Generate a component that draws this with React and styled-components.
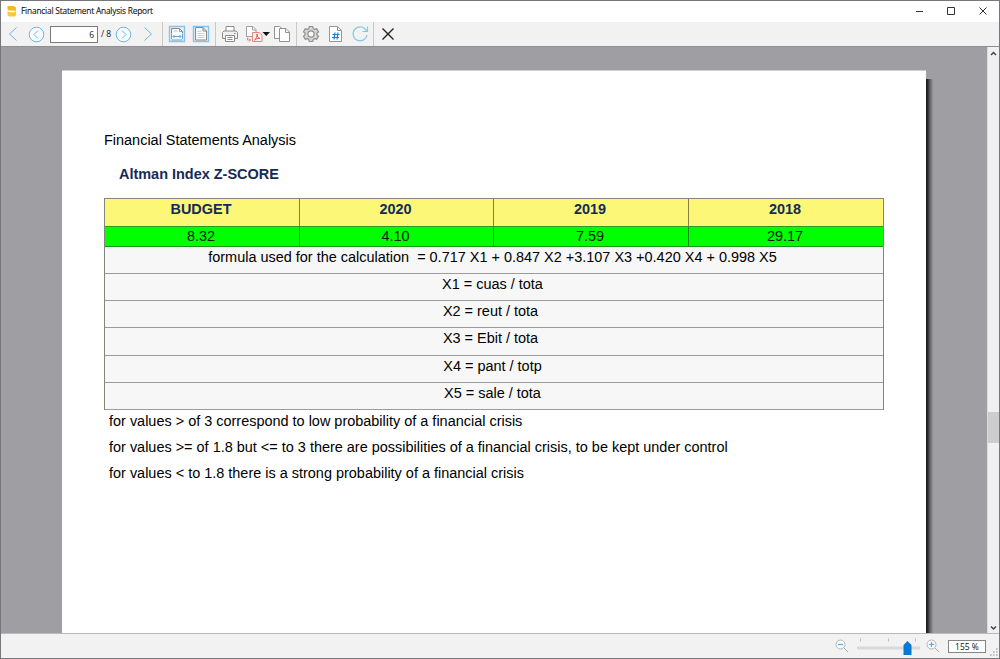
import React from "react";
import styled, { createGlobalStyle } from "styled-components";

const GlobalStyle = createGlobalStyle`
  * { box-sizing: border-box; }
  body { margin: 0; overflow: hidden; }
`;

const Window = styled.div`
  width: 1000px;
  height: 659px;
  display: flex;
  flex-direction: column;
  border: 1px solid #77777a;
  background: #fff;
  font-family: "Open Sans", "Noto Sans", sans-serif;
  color: #111;
`;

const TitleBar = styled.header`
  height: 21px;
  flex: none;
  display: flex;
  align-items: center;
  padding: 0 0 2px 6px;
`;

const Title = styled.span`
  flex: 1;
  margin-left: 4px;
  font-size: 8.4px;
  line-height: 20px;
  letter-spacing: -0.21px;
  -webkit-text-stroke: 0.1px #111;
`;

const Toolbar = styled.nav`
  height: 24px;
  flex: none;
  display: flex;
  align-items: center;
  background: #f2f2f2;
`;

const Icon = styled.svg`
  display: block;
  flex: none;
  fill: none;
  margin-left: ${(p) => p.$gap || 0}px;
`;

const Divider = styled.i`
  width: 1px;
  height: 24px;
  background: #c9c9c9;
  margin-left: ${(p) => p.$gap}px;
`;

const PageInput = styled.div`
  width: 48px;
  height: 17px;
  margin-left: 5px;
  padding-right: 3px;
  border: 1px solid #7a7a7a;
  background: #fff;
  text-align: right;
  font-size: 8.5px;
  line-height: 15px;
`;

const PageCount = styled.span`
  width: 17px;
  padding-left: 3px;
  font-size: 8.5px;
  line-height: 16px;
  white-space: nowrap;
`;

const Workspace = styled.main`
  flex: 1;
  min-height: 0;
  display: flex;
  background: #9f9ea3;
  border-top: 1px solid #8e8d93;
`;

const Viewport = styled.div`
  flex: 1;
  display: flex;
  overflow: hidden;
  padding: 23px 0 0 61px;
`;

const Sheet = styled.article`
  width: 864px;
  background: #fff;
  border-top: 1px solid #cfcfd1;
  padding: 60px 42px 0;
  font-family: "Liberation Sans", Arial, sans-serif;
  font-size: 14.46px;
  color: #000;
`;

const SheetShadow = styled.div`
  width: 7px;
  margin-top: 9px;
  background: linear-gradient(to right, #161619, #2b2b2e 25%, #68676b 60%, #98979c);
`;

const ReportTitle = styled.h1`
  margin: 0;
  font-size: 14.46px;
  font-weight: 400;
  line-height: 18px;
`;

const SectionTitle = styled.h2`
  margin: 16px 0 15px 15px;
  font-size: 14.46px;
  font-weight: 700;
  line-height: 18px;
  color: #142b57;
`;

const Table = styled.section`
  width: 780px;
  border: 1px solid #85857d;
  border-bottom: 0;
`;

const Row = styled.div`
  display: grid;
  grid-template-columns: 194px 194px 195px 195px;
  height: ${(p) => (p.$head ? 28 : 20)}px;
  background: ${(p) => (p.$head ? "#fcf777" : "#00ff00")};
  border-bottom: 1px solid ${(p) => (p.$head ? "#2c9c20" : "#159a15")};
  color: ${(p) => (p.$head ? "#142b57" : "#001a00")};
  font-weight: ${(p) => (p.$head ? 700 : 400)};
  line-height: ${(p) => (p.$head ? 20 : 19)}px;
`;

const Cell = styled.div`
  text-align: center;
  padding-right: 2px;
  border-left: 1px solid ${(p) => (p.$head ? "#84823f" : "#078c07")};
  &:first-child {
    border-left: 0;
  }
`;

const FormulaRow = styled.div`
  height: ${(p) => p.$height || 27}px;
  border-bottom: 1px solid #9b9b9b;
  background: #f7f7f7;
  text-align: center;
  line-height: 20px;
  padding-right: 3px;
  white-space: pre;
`;

const Note = styled.p`
  margin: 0 0 0 5px;
  line-height: 26px;
  white-space: nowrap;
  &:first-of-type { margin-top: -2px; }
`;

const Scrollbar = styled.aside`
  width: 12px;
  display: flex;
  flex-direction: column;
  align-items: center;
  background: #f0f0f0;
  border-left: 1px solid #dcdcde;
`;

const Thumb = styled.div`
  width: 11px;
  height: 31px;
  margin: 352px 0 auto;
  background: #cdcdcd;
`;

const StatusBar = styled.footer`
  height: 25px;
  flex: none;
  display: flex;
  align-items: center;
  justify-content: flex-end;
  border-top: 1px solid #b9b9bb;
  background: #f2f2f2;
`;

const ZoomValue = styled.div`
  width: 38px;
  height: 13px;
  margin-left: 8px;
  border: 1px solid #858585;
  background: #fff;
  text-align: center;
  font-size: 8.5px;
  line-height: 11px;
`;

const years = ["BUDGET", "2020", "2019", "2018"];
const scores = ["8.32", "4.10", "7.59", "29.17"];
const variables = [
  "X1 = cuas / tota",
  "X2 = reut / tota ",
  "X3 = Ebit / tota ",
  "X4 = pant / totp",
  "X5 = sale / tota",
];
const notes = [
  "for values > of 3 correspond to low probability of a financial crisis",
  "for values >= of 1.8 but <= to 3 there are possibilities of a financial crisis, to be kept under control",
  "for values < to 1.8 there is a strong probability of a financial crisis",
];

const BLUE = "#6db5df";

const Chevron = ({ flip, gap }) => (
  <Icon width="10" height="16" $gap={gap} stroke={BLUE}>
    <path d={flip ? "M1.5 1.5 8.500 8l-7 6.500" : "M8.500 1.500 1.500 8l7 6.500"} />
  </Icon>
);

const CircleChevron = ({ flip, gap }) => (
  <Icon width="17" height="17" $gap={gap} stroke={BLUE}>
    <circle cx="8.500" cy="8.500" r="7.300" fill="#f8fbfd" />
    <path d={flip ? "M7 4.500l4 4L7 12.500" : "M10 4.500 6 8.500 10 12.500"} />
  </Icon>
);

const PageView = ({ wide, gap }) => (
  <Icon width="18" height="18" $gap={gap}>
    <rect x="1.500" y="1.500" width="15" height="15" stroke="#85c3ea" strokeWidth="1.400" fill="#e9f2f8" />
    {wide ? (
      <>
        <path d="M3.500 8.500V3.500h8L14.500 6.500v2" fill="#fafafa" stroke="#888" />
        <path d="M4 8h10v6H4z" fill="#fafafa" />
        <path d="M11.500 3.500V6.500H14.500M3.500 15h11" stroke="#999" />
        <path d="M5.500 6h4" stroke="#c4c4c4" />
        <path d="M3.500 9v5M14.500 9v5M5 11.500h8M6.500 10 5 11.500 6.500 13M11.500 10 13 11.500 11.500 13" stroke="#58aae0" />
      </>
    ) : (
      <>
        <path d="M3.500 2.500h7.500L14.500 6v9H3.500z" fill="#fafafa" stroke="#888" />
        <path d="M11 2.500v3.500h3.500" stroke="#888" />
        <path d="M5.500 6.500h4M5.500 8.500h7M5.500 10.500h7M5.500 12.500h7" stroke="#d2d2d2" />
      </>
    )}
  </Icon>
);

const Magnifier = ({ plus, gap }) => (
  <Icon width="14" height="14" $gap={gap}>
    <circle cx="5.500" cy="5.500" r="4.500" stroke="#b5b5b5" fill="#f7fafc" />
    <path d="M9 9l4 4" stroke="#aaa" />
    <path d={plus ? "M3 5.500h5M5.500 3v5" : "M3 5.500h5"} stroke="#55abe2" strokeWidth="1.200" />
  </Icon>
);

export default function App() {
  return (
    <>
      <GlobalStyle />
      <Window>
        <TitleBar>
          <Icon width="10" height="12">
            <path d="M0.500 1h6l2.500 1.500V5L8 6.300 6.500 5.500H2L0.500 4.500z" fill="#fbb81c" />
            <path d="M0.500 6 2.500 7.300h4.500L9 6V10.300L7.800 11.500H2L0.500 10.500z" fill="#fdc73b" />
          </Icon>
          <Title>Financial Statement Analysis Report</Title>
          <Icon width="76" height="10" stroke="#333">
            <path d="M4 5.500h7M35.500 1.500h7v7h-7zM67.500 1.500l7 7M74.500 1.500l-7 7" />
          </Icon>
          <Icon width="11" height="10" />
        </TitleBar>

        <Toolbar>
          <Chevron gap={7} />
          <CircleChevron gap={10} />
          <PageInput>6</PageInput>
          <PageCount>/ 8</PageCount>
          <CircleChevron flip />
          <Chevron flip gap={11} />
          <Divider $gap={9} />
          <PageView wide gap={5} />
          <PageView gap={6} />
          <Divider $gap={5} />
          <Icon width="18" height="18" $gap={5} stroke="#8b8b8b">
            <path d="M5 6V1.500h8V6" fill="#fff" />
            <path d="M4.500 13.500h-3v-6L3 6h12l1.500 1.500v6h-3" fill="#f0f0f0" />
            <path d="M4.500 10.500h9v6h-9zM6.500 12.500h5M6.500 14.500h5M13 8.500h1.500" fill="#fff" />
          </Icon>
          <Icon width="26" height="18" $gap={6}>
            <path d="M7 11.500H1.500v-10h6.500L11 4.500V8" fill="#fff" stroke="#a0a0a0" />
            <path d="M7.500 1.500V5H11" stroke="#a0a0a0" />
            <path d="M7.500 7.500h6.500l3 2.500v6.500h-9.500z" fill="#fff4f3" stroke="#ec827e" />
            <path d="M9.500 15c1.500-1 3-3.500 2.500-6 0 3 1.500 4 3 4.500-1.500-.5-4 .2-5.500 1.500z" stroke="#e04a46" strokeWidth=".9" />
            <path d="M2.500 12.500V15H5.500M4 13.500 5.500 15 4 16.500" stroke="#ec827e" />
            <path d="M17.500 7h7.500L21.250 11z" fill="#111" />
          </Icon>
          <Icon width="18" height="18" $gap={2} stroke="#929292">
            <path d="M1.500 13.500v-12H6.500l3 2.500v9.500z" fill="#fff" />
            <path d="M6.500 3.500h6.500l3.500 3.500v9.500h-10z" fill="#fff" />
            <path d="M12.500 3.500V7.500h4" />
          </Icon>
          <Divider $gap={5} />
          <Icon width="18" height="18" $gap={5} stroke="#909090" strokeWidth="1.200">
            <path d="M7.300 1.500h3.400l.6 2.200 1.200.7 2.200-.6 1.800 3-1.600 1.500v1.400l1.600 1.600-1.800 2.900-2.200-.6-1.200.7-.6 2.200H7.300l-.6-2.200-1.200-.7-2.200.6-1.800-2.900 1.600-1.600V8.300L1.500 6.800l1.800-3 2.200.6 1.200-.7z" fill="#d5d5d5" />
            <circle cx="9" cy="9" r="3.100" fill="#f8f8f8" />
          </Icon>
          <Icon width="15" height="18" $gap={8}>
            <path d="M1.500 1.500h8L13.500 5.500v11h-12z" fill="#fff" stroke="#959595" />
            <path d="M9.500 1.500v4h4" stroke="#959595" />
            <path d="M7 7.500l-1 7M10 7.500l-1 7M4.500 9.500h7M4 12.500h7" stroke="#1684d2" strokeWidth="1.200" />
          </Icon>
          <Icon width="18" height="18" $gap={8} stroke="#7dcbe5" strokeWidth="1.200">
            <path d="M15.500 6A7 7 0 1 0 16 10M16.500 1.500V6.500h-5" />
          </Icon>
          <Divider $gap={4} />
          <Icon width="14" height="14" $gap={7} stroke="#222" strokeWidth="1.400">
            <path d="M1.500 1.500l11 11M12.500 1.500l-11 11" />
          </Icon>
        </Toolbar>

        <Workspace>
          <Viewport>
            <Sheet>
              <ReportTitle>Financial Statements Analysis</ReportTitle>
              <SectionTitle>Altman Index Z-SCORE</SectionTitle>
              <Table>
                <Row $head>
                  {years.map((y) => <Cell $head key={y}>{y}</Cell>)}
                </Row>
                <Row>
                  {scores.map((s) => <Cell key={s}>{s}</Cell>)}
                </Row>
                <FormulaRow>{"formula used for the calculation  = 0.717 X1 + 0.847 X2 +3.107 X3 +0.420 X4 + 0.998 X5"}</FormulaRow>
                {variables.map((v) => (
                  <FormulaRow $height={27.2} key={v}>{v}</FormulaRow>
                ))}
              </Table>
              {notes.map((n) => <Note key={n}>{n}</Note>)}
            </Sheet>
            <SheetShadow />
          </Viewport>
          <Scrollbar>
            <Icon width="9" height="13" stroke="#444" strokeWidth="1.500">
              <path d="M2 8l2.500-2.500L7 8" />
            </Icon>
            <Thumb />
            <Icon width="9" height="13" stroke="#444" strokeWidth="1.500">
              <path d="M2 6.500 4.500 9 7 6.500" />
            </Icon>
          </Scrollbar>
        </Workspace>

        <StatusBar>
          <Magnifier />
          <Icon width="66" height="20" $gap={6}>
            <path d="M2 12h63" stroke="#d9d9d9" strokeWidth="3" />
            <path d="M5.500 2.500v3M33.500 2.500v3M60.500 2.500v3" stroke="#bbb" />
            <path d="M48.500 9l4-4 4 4v10h-8z" fill="#0878d4" />
          </Icon>
          <Magnifier plus gap={5} />
          <ZoomValue>155 %</ZoomValue>
          <Icon width="10" height="24" $gap={3}>
            <path d="M7 15h1.500M7 18h1.500M7 21h1.500M4 18h1.500M4 21h1.500M1 21h1.500" stroke="#aaa" strokeWidth="1.500" />
          </Icon>
        </StatusBar>
      </Window>
    </>
  );
}
